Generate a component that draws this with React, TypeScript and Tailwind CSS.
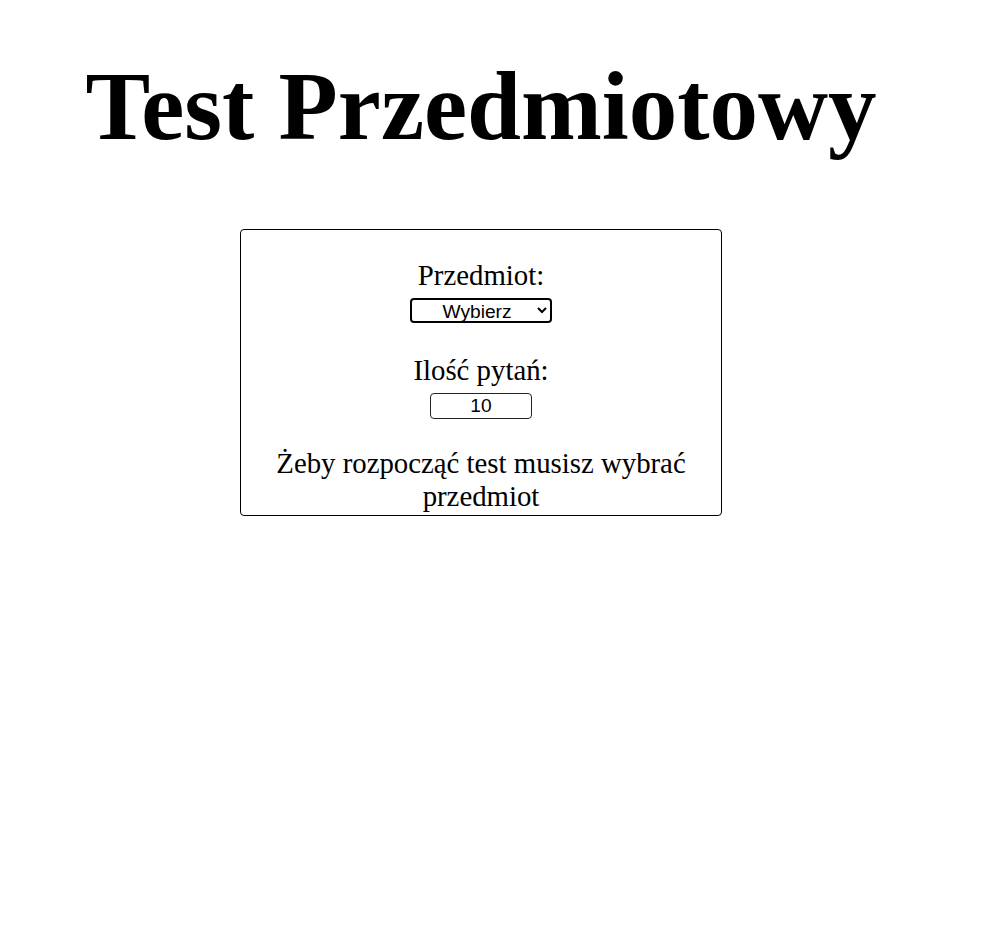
import { useState } from 'react';

export default function App() {
  const [subject, setSubject] = useState('');
  const [count, setCount] = useState('10');

  return (
    <div className="min-h-screen bg-white text-black font-['Liberation_Serif',serif]">
      <div className="w-[962px] flex flex-col items-center">
        <h1 className="mt-[52px] text-[97px] leading-[110px] font-bold text-center">
          Test Przedmiotowy
        </h1>

        <div className="mt-[67px] w-[482px] border border-black rounded-[4px] pt-[29px] pb-[2px] px-[10px] flex flex-col items-center text-center">
          <label htmlFor="subject" className="block text-[28.8px] leading-[33px]">
            Przedmiot:
          </label>
          <select
            id="subject"
            value={subject}
            onChange={(e) => setSubject(e.target.value)}
            className="mt-[6px] h-[25px] w-[142px] border-2 border-black rounded-[4px] bg-white text-[19.2px] leading-[21px] font-['Liberation_Sans',sans-serif] text-center [text-align-last:center] pl-[4px]"
          >
            <option value="">Wybierz</option>
            <option value="matematyka">Matematyka</option>
            <option value="fizyka">Fizyka</option>
          </select>

          <label htmlFor="count" className="block mt-[31px] text-[28.8px] leading-[33px]">
            Ilość pytań:
          </label>
          <input
            id="count"
            type="text"
            value={count}
            onChange={(e) => setCount(e.target.value)}
            className="mt-[6px] h-[26px] w-[102px] border border-[#222] rounded-[4px] bg-white text-[19.2px] leading-[21px] font-['Liberation_Sans',sans-serif] text-center"
          />

          <p className="mt-[28px] text-[28.8px] leading-[33px]">
            Żeby rozpocząć test musisz wybrać przedmiot
          </p>
        </div>
      </div>
    </div>
  );
}
